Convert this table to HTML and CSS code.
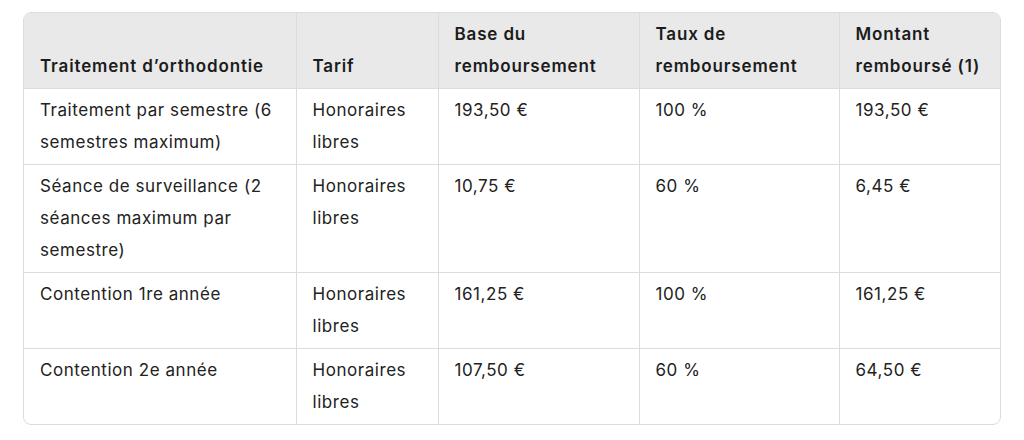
FILE: index.html
```html
<!DOCTYPE html>
<html lang="fr">
<head>
<meta charset="utf-8">
<link rel="stylesheet" href="styles.css">
</head>
<body>
<div class="wrap">
<table class="tbl">
<colgroup>
<col class="c1"><col class="c2"><col class="c3"><col class="c4"><col class="c5">
</colgroup>
<thead>
<tr>
<th>Traitement d’orthodontie</th>
<th>Tarif</th>
<th>Base du remboursement</th>
<th>Taux de remboursement</th>
<th>Montant remboursé (1)</th>
</tr>
</thead>
<tbody>
<tr>
<td>Traitement par semestre (6 semestres maximum)</td>
<td>Honoraires libres</td>
<td>193,50 €</td>
<td>100 %</td>
<td>193,50 €</td>
</tr>
<tr>
<td>Séance de surveillance (2 séances maximum par semestre)</td>
<td>Honoraires libres</td>
<td>10,75 €</td>
<td>60 %</td>
<td>6,45 €</td>
</tr>
<tr>
<td>Contention 1re année</td>
<td>Honoraires libres</td>
<td>161,25 €</td>
<td>100 %</td>
<td>161,25 €</td>
</tr>
<tr>
<td>Contention 2e année</td>
<td>Honoraires libres</td>
<td>107,50 €</td>
<td>60 %</td>
<td>64,50 €</td>
</tr>
</tbody>
</table>
</div>
</body>
</html>
```
FILE: styles.css
```css
html, body {
  margin: 0;
  background: #ffffff;
}
body {
  padding: 12px 23px;
  font-family: Inter, "Noto Sans", sans-serif;
  font-size: 17px;
  letter-spacing: 0.55px;
  color: #222222;
}
.wrap {
  width: 978px;
  box-sizing: border-box;
  border: 1px solid #dcdcdc;
  border-radius: 8px;
  overflow: hidden;
}
.tbl {
  width: 100%;
  border-collapse: collapse;
  table-layout: fixed;
}
.c1 { width: 272px; }
.c2 { width: 142px; }
.c3 { width: 201px; }
.c4 { width: 200px; }
.c5 { width: auto; }
.tbl th, .tbl td {
  text-align: left;
  line-height: 32px;
  padding: 5px 10px 6px 16px;
  border-left: 1px solid #dcdcdc;
  border-top: 1px solid #dcdcdc;
}
.tbl th:first-child, .tbl td:first-child { border-left: none; }
.tbl thead th {
  border-top: none;
  background: #e9e9e9;
  font-weight: 600;
  letter-spacing: 0.85px;
  vertical-align: bottom;
  color: #1c1c1c;
}
.tbl td {
  vertical-align: top;
}
```
